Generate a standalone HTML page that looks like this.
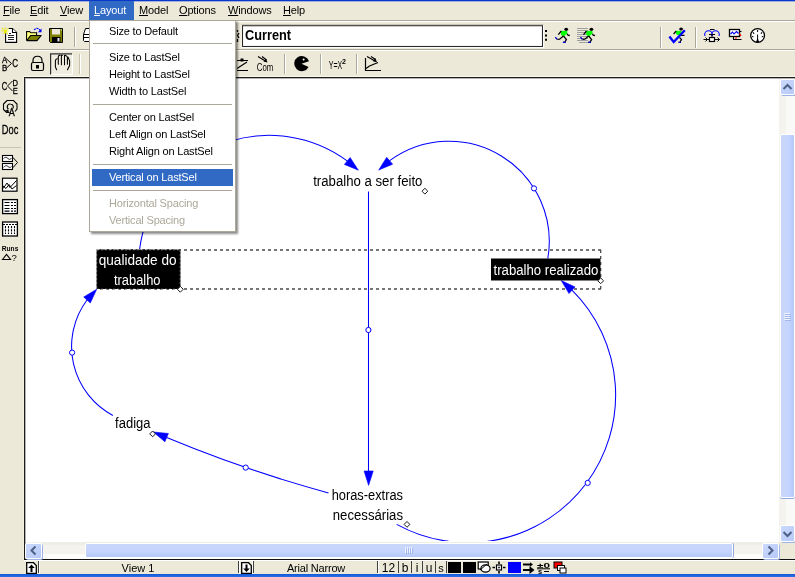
<!DOCTYPE html>
<html>
<head>
<meta charset="utf-8">
<title>Vensim</title>
<style>
html,body{margin:0;padding:0;}
body{width:795px;height:577px;overflow:hidden;background:#ece9d8;position:relative;font-family:"Liberation Sans",sans-serif;font-size:11px;color:#000;}
.abs{position:absolute;}
#topline{left:0;top:0;width:795px;height:1px;background:#0a36c9;}
#topline2{left:0;top:1px;width:795px;height:1px;background:#9fb0e0;}
#botline{left:0;top:574px;width:795px;height:3px;background:linear-gradient(#1458d8,#2d6fe6);}
/* menubar */
#menubar{left:0;top:2px;width:795px;height:18px;}
.mi{letter-spacing:-0.15px;position:absolute;top:0px;height:18px;line-height:20px;font-size:11px;white-space:nowrap;}
.mi u{text-decoration:underline;}
#mlayout{background:#316ac5;color:#fff;}
.hl{position:absolute;left:0;width:795px;height:1px;}
/* popup */
#popup{left:89px;top:20px;width:145px;height:210px;background:#fff;border:1px solid #aca899;box-shadow:2px 2px 2px rgba(0,0,0,.45);}
.pi{letter-spacing:-0.18px;position:absolute;left:2px;width:141px;height:17px;line-height:17px;font-size:11px;white-space:nowrap;}
.pi span{position:absolute;left:17px;top:0;}
.pi.sel{background:#316ac5;color:#fff;}
svg{will-change:transform;}
.pi.dis{color:#aca899;}
.psep{position:absolute;left:3px;width:139px;height:1px;background:#aca899;}
/* canvas */
#canvas{left:24px;top:77px;width:771px;height:484px;background:#fff;}
#cv-top{left:24px;top:77px;width:771px;height:1px;background:#1c1c1c;}
#cv-left{left:24px;top:77px;width:1px;height:483px;background:#1c1c1c;}
#cv-bot{left:24px;top:559px;width:771px;height:2px;background:linear-gradient(#111 0,#111 55%,#fff 56%,#fff 100%);}
/* scrollbars */
#vsb{left:779px;top:79px;width:16px;height:463px;background:#f4f3ee;}
#hsb{left:26px;top:542px;width:753px;height:17px;background:#f4f3ee;}
#corner{left:779px;top:542px;width:16px;height:17px;background:#ece9d8;}
.sbtn{position:absolute;background:linear-gradient(135deg,#cbd9fd,#b6c9f7);box-shadow:1px 1px 0 #9db3e6;border:1px solid #fff;border-radius:2px;box-sizing:border-box;}
.thumb{position:absolute;background:#c3d3fd;border:1px solid #fff;border-radius:2px;box-sizing:border-box;}
/* status */
#status{left:0;top:561px;width:795px;height:13px;font-size:12px;}
.st{position:absolute;top:561px;height:13px;line-height:14px;font-size:11px;text-align:center;white-space:nowrap;}
.vs{position:absolute;top:561px;width:1px;height:12px;background:#404040;}
.vw{position:absolute;top:561px;width:1px;height:13px;background:#fff;}
</style>
</head>
<body>
<div id="root" style="position:absolute;left:0;top:0;width:795px;height:577px;will-change:transform">
<div class="abs" id="topline"></div>
<div class="abs" id="topline2"></div>

<!-- MENUBAR -->
<div class="mi" style="left:3px"><u>F</u>ile</div>
<div class="mi" style="left:30px"><u>E</u>dit</div>
<div class="mi" style="left:60px"><u>V</u>iew</div>
<div class="mi" id="mlayout" style="left:89px;top:1px;width:45px;height:19px;line-height:18px;"><span style="margin-left:5px"><u>L</u>ayout</span></div>
<div class="mi" style="left:139px"><u>M</u>odel</div>
<div class="mi" style="left:179px"><u>O</u>ptions</div>
<div class="mi" style="left:228px"><u>W</u>indows</div>
<div class="mi" style="left:283px"><u>H</u>elp</div>
<div class="hl" style="top:20px;background:#aca899"></div>
<div class="hl" style="top:21px;background:#fff"></div>
<div class="hl" style="top:49px;background:#aca899"></div>
<div class="hl" style="top:50px;background:#fff"></div>

<!-- TOOLBAR1 -->
<svg class="abs" id="tbsvg" style="left:0;top:22px" width="795" height="55" viewBox="0 22 795 55">
<!-- NEW -->
<g stroke="#000" stroke-width="1.1" fill="#fff">
<path d="M5.6 32V42.4H16.6V32.5L12.5 28.5H8.5"/>
<path d="M12.5 28.5V32.5H16.6" fill="#fff"/>
<path d="M8 35.5H14M8 37.5H14M8 39.5H14M9 33.5H11" stroke-width="1.1" stroke="#222"/>
</g>
<path d="M2 28L8.5 34.5M8.5 28.5L3 33.5M5.2 27.5V34.5M1.5 31H9" stroke="#e6e600" stroke-width="1.1" fill="none" stroke-dasharray="1.6 .7"/>
<!-- OPEN -->
<path d="M26.6 40.3V31.6H29.6L30.8 32.8H36.6V35" fill="#ffff66" stroke="#000" stroke-width="1.1"/>
<path d="M27.6 39.5V32.6H29.4L30.4 33.8H35.6V35H30.6Z" fill="#ffff88"/>
<path d="M26.8 40.6L30.6 35.5H41.2L37 40.6Z" fill="#808000" stroke="#000" stroke-width="1.1" stroke-linejoin="round"/>
<path d="M34.2 30C35.8 27.8 38.5 27.8 40 30.2" fill="none" stroke="#0000ff" stroke-width="1.2" stroke-dasharray="2 .8"/>
<path d="M41.5 28.5V32.2H37.8Z" fill="#0000ff"/>
<!-- SAVE -->
<path d="M49.5 28.5H62.5V42.5H50.5L49.5 41.5Z" fill="#808000" stroke="#000" stroke-width="1"/>
<rect x="52" y="29" width="8" height="5.5" fill="#ece9d8"/>
<rect x="52" y="37" width="8.5" height="5" fill="#000"/>
<rect x="57.5" y="38" width="2" height="3.5" fill="#e8e8e8"/>
<rect x="61" y="29.5" width="1" height="1" fill="#fff"/>
<!-- sep -->
<path d="M74.5 27V47" stroke="#aca899" stroke-width="1"/><path d="M75.5 27V47" stroke="#fff" stroke-width="1"/>
<!-- PRINT (partial) -->
<path d="M85.5 28.5H90V34.5H83.5Z" fill="#fff" stroke="#000" stroke-width="1"/>
<path d="M83.5 34.5H90V41.5H84.5L83.5 40.5Z" fill="#fff" stroke="#000" stroke-width="1"/>
<path d="M84 37.5H90" stroke="#000" stroke-width="1"/>
<!-- grip partial before Current -->
<path d="M237.5 30V32M239 33L237.5 35.5L239 38M237.5 39V42" stroke="#000" stroke-width="1.3" fill="none"/>
<!-- textbox -->
<rect x="242.5" y="25.7" width="300" height="20.8" fill="#fff" stroke="#2a2a2a" stroke-width="1.1"/>
<path d="M241.5 24.6H543.5" fill="none" stroke="#c4c1b3" stroke-width="1"/>
<path d="M241.2 25V47.5" fill="none" stroke="#f8f6ee" stroke-width="1"/>
<path d="M543.6 25V47.6H242" fill="none" stroke="#fff" stroke-width="1"/>
<text x="245" y="40.2" font-family="'Liberation Sans',sans-serif" font-weight="bold" font-size="14px" textLength="46" lengthAdjust="spacingAndGlyphs">Current</text>
<!-- grip -->
<path d="M545 30H547V32H545ZM545 34.4H547V36.4H545ZM545 38.8H547V40.8H545Z" fill="#000"/>
<!-- runner1 -->
<g id="runner">
<ellipse cx="566.2" cy="29.3" rx="1.9" ry="1.6" fill="#000"/>
<path d="M561 30.8L567.2 31L567.4 33.6L563.6 36.4L561 35Z" fill="#00ff00"/>
<path d="M561.3 31L558.3 34.6M567.3 33.8L568 35.2L569.8 35.5M563.4 36L559.6 39.2L557.3 39.3M563.6 36.2L566.4 39.6L564.9 41.8" fill="none" stroke="#000" stroke-width="1.3"/>
<path d="M555.3 37.3L557.2 39.4M562.9 42.2H565.8" stroke="#0000c0" stroke-width="1.4" fill="none"/>
</g>
<!-- runner2 -->
<path d="M577 28.5H588M577 30.5H588M577 32.5H588M577 34.5H588M577 36.5H588M577 38.5H588M577 40.5H588M579 42.5H590" stroke="#a0a0a0" stroke-width="1"/>
<use href="#runner" x="25.2" y="0"/>
<!-- sep -->
<path d="M660.5 27V48" stroke="#aca899" stroke-width="1"/><path d="M661.5 27V48" stroke="#fff" stroke-width="1"/>
<!-- check runner -->
<ellipse cx="681.1" cy="29" rx="1.9" ry="1.6" fill="#000"/>
<path d="M676 30.8L681.5 31L681 34.5L677.5 35.2L676 34Z" fill="#00ff00"/>
<path d="M676.2 31L673.6 34M681 35.4H684.5M679.5 37.5L681.5 39.5L680 41.8" fill="none" stroke="#000" stroke-width="1.2"/>
<path d="M678.3 42.3H681" stroke="#0000c0" stroke-width="1.3"/>
<path d="M669.4 36.6L673.7 42L684.8 30.2" fill="none" stroke="#0000ff" stroke-width="2.4"/>
<!-- sep -->
<path d="M695.5 27V48" stroke="#aca899" stroke-width="1"/><path d="M696.5 27V48" stroke="#fff" stroke-width="1"/>
<!-- stock flow loops -->
<circle cx="708.5" cy="34.5" r="3.8" fill="none" stroke="#0000ff" stroke-width="1.1"/>
<circle cx="715.5" cy="34.5" r="3.8" fill="none" stroke="#0000ff" stroke-width="1.1"/>
<rect x="704" y="36" width="16" height="7" fill="#ece9d8"/>
<path d="M710 29.5H714.5M709 34.5H715M712 34.5V37" stroke="#000" stroke-width="1" fill="none"/>
<rect x="709.5" y="37.5" width="5" height="4" fill="#fff" stroke="#000" stroke-width="1.2"/>
<path d="M703.5 39.5H709M715 39.5H719.5M705.5 37.5L707.5 39.5L705.5 41.5M717.5 37.5L719.5 39.5L717.5 41.5" stroke="#000" stroke-width="1" fill="none"/>
<!-- monitor graph -->
<rect x="729.5" y="29.5" width="10" height="7" fill="#fff" stroke="#000" stroke-width="1.3"/>
<path d="M730.5 34L732.5 32L734 34L736.5 31.5L738.5 33.5" fill="none" stroke="#0000ff" stroke-width="1.1"/>
<path d="M739.5 31.5H741.5M733.5 37V39.5H741.5" fill="none" stroke="#000" stroke-width="1.1"/>
<path d="M739.5 33.5L741 36M735 38H737" stroke="#ff0000" stroke-width="1.2" fill="none"/>
<!-- dial -->
<circle cx="757.6" cy="35.5" r="6.9" fill="#fff" stroke="#000" stroke-width="1.3"/>
<path d="M757.6 42V34.5M753 32L754 34M757.6 30V32M762 32L761 34M752 36.5L753.5 36.8M763.2 36.5L761.7 36.8" stroke="#000" stroke-width="1" fill="none"/>
<path d="M756 42.2L757.6 38L759.2 42.2Z" fill="#000"/>

<!-- TOOLBAR 2 -->
<!-- A>C B -->
<g font-family="'Liberation Sans',sans-serif" font-size="8.5px" fill="#000" stroke="#000" stroke-width=".3">
<text x="2" y="62.6" font-size="9px" textLength="5.2" lengthAdjust="spacingAndGlyphs">A</text>
<text x="2" y="70.6" font-size="9px" textLength="5.2" lengthAdjust="spacingAndGlyphs">B</text>
<text x="12.3" y="67.2" font-size="10px" textLength="5.8" lengthAdjust="spacingAndGlyphs">C</text>
</g>
<path d="M6 58.5L11.5 63.5L6 68.5" fill="none" stroke="#000" stroke-width="1"/>
<!-- lock -->
<path d="M33 62.5V60.5C33 54.8 42 54.8 42 60.5V62.5" fill="none" stroke="#000" stroke-width="1.2"/>
<rect x="31.5" y="62.5" width="12" height="8" rx="1.5" fill="none" stroke="#000" stroke-width="1.2"/>
<rect x="36" y="65" width="3" height="3.5" fill="#000"/>
<!-- hand pressed -->
<rect x="51" y="54" width="21.5" height="20.5" fill="#efece0"/>
<path d="M50.6 74.5V53.8H72" fill="none" stroke="#303030" stroke-width="1.2"/>
<path d="M51 74.5H72.5V54.5" fill="none" stroke="#fff" stroke-width="1"/>
<path d="M56.6 69.8L55.4 67V60.6C55.6 59.4 56.3 58.9 57.2 58.7M58.3 64.2V56.6C58.5 55.6 59.3 55.1 60.2 55.1M61.4 64.7V55.4M61.4 55.2H62.6M64.5 64.7V55.4M64.5 55.2C65.5 55.2 66.2 55.5 66.5 56.2M67.4 64.2V56.8M67.6 57C68.2 57.4 68.5 57.8 68.6 58.5L69.6 60.8V65.6L67.5 69.8" fill="none" stroke="#000" stroke-width="1.05" stroke-linecap="round"/>
<!-- sep -->
<path d="M79.5 54V74" stroke="#aca899" stroke-width="1" opacity=".6"/><path d="M80.5 54V74" stroke="#fff" stroke-width="1"/>
<!-- partial icon after menu -->
<path d="M237 60.5H248M237 70.5H248M237 68.5L247 62" stroke="#000" stroke-width="1.2" fill="none"/>
<rect x="240.5" y="58.5" width="3" height="3" fill="#000"/>
<!-- Com -->
<path d="M258 56.5L266 61.5M262 56.5L266.5 60" stroke="#000" stroke-width="1.1" fill="none"/>
<path d="M267.5 62.5L263.5 61.5L266 58.5Z" fill="#000"/>
<text x="256.8" y="71" font-family="'Liberation Sans',sans-serif" font-size="10.5px" textLength="16.5" lengthAdjust="spacingAndGlyphs">Com</text>
<!-- sep -->
<path d="M284.5 54V74" stroke="#aca899" stroke-width="1"/><path d="M285.5 54V74" stroke="#fff" stroke-width="1"/>
<!-- pacman -->
<path d="M301.5 63.7L309 61.2A7.6 7.6 0 1 0 308.6 67Z" fill="#000"/>
<circle cx="303.6" cy="59.5" r="1" fill="#fff"/>
<!-- sep -->
<path d="M320.5 54V74" stroke="#aca899" stroke-width="1"/><path d="M321.5 54V74" stroke="#fff" stroke-width="1"/>
<!-- Y=X2 -->
<text x="328.8" y="69" font-family="'Liberation Sans',sans-serif" font-size="11.5px" textLength="13.5" lengthAdjust="spacingAndGlyphs">Y=X</text>
<text x="342" y="63.5" font-family="'Liberation Sans',sans-serif" font-size="7px" font-weight="bold">2</text>
<!-- sep -->
<path d="M356.5 54V74" stroke="#aca899" stroke-width="1"/><path d="M357.5 54V74" stroke="#fff" stroke-width="1"/>
<!-- graph-arrow icon -->
<path d="M365.5 58V70.5H381M366 68.5L369.5 66L378 62.5" fill="none" stroke="#000" stroke-width="1.2"/>
<path d="M367 56.5L375 61M371 56.5L375.5 59.5" stroke="#000" stroke-width="1.1" fill="none"/>
<path d="M377 62.2L372.8 61.2L375.3 58Z" fill="#000"/>
</svg>

<!-- LEFTBAR -->
<svg class="abs" id="lbsvg" style="left:0;top:78px" width="24" height="190" viewBox="0 78 24 190">
<g font-family="'Liberation Sans',sans-serif" fill="#000" stroke="#000" stroke-width=".3">
<!-- C<D E -->
<text x="1.8" y="90.2" font-size="10.5px" textLength="5.5" lengthAdjust="spacingAndGlyphs">C</text>
<text x="12.5" y="85.8" font-size="9px" textLength="5.5" lengthAdjust="spacingAndGlyphs">D</text>
<text x="12.8" y="93.5" font-size="9px" textLength="5" lengthAdjust="spacingAndGlyphs">E</text>
<path d="M12.5 81L7.5 86L12.5 91" fill="none" stroke="#000" stroke-width="1"/>
<!-- loop icon -->
<path d="M7 100.5H13.5L17 104V109L15 111.5M9.5 112.5H6.5L3.5 109.5V104L7 100.5" fill="none" stroke="#000" stroke-width="1.1"/>
<path d="M8.5 109C6 107.5 7.5 103.5 10.5 104C13 104.2 14 107 12.8 108.5" fill="none" stroke="#000" stroke-width="1.1"/>
<path d="M5 111L9 112.5L8 109.5Z" fill="#000"/>
<text x="8.8" y="115.6" font-size="10px" textLength="6" lengthAdjust="spacingAndGlyphs">A</text>
<!-- Doc -->
<text x="1.8" y="134.3" font-size="12.5px" textLength="16.5" lengthAdjust="spacingAndGlyphs">Doc</text>
</g>
<path d="M0 147.5H21" stroke="#c9c5b3" stroke-width="1"/>
<!-- two graphs arrow -->
<rect x="2.5" y="155.5" width="10" height="6" fill="#fff" stroke="#000" stroke-width="1.1"/>
<rect x="2.5" y="163.5" width="10" height="6" fill="#fff" stroke="#000" stroke-width="1.1"/>
<path d="M3.5 158.5C5 157 6.5 157 8 158.5S10.5 159.5 11.5 158M3.5 167.5C5 165.5 6.5 165 8 166.5S10.5 167.5 11.5 166.5" fill="none" stroke="#000" stroke-width=".8"/>
<path d="M12.8 157.3L17.5 162.5L12.8 167.8" fill="none" stroke="#000" stroke-width="1"/>
<!-- graph -->
<rect x="2.5" y="178.2" width="14.5" height="13" fill="#fff" stroke="#000" stroke-width="1.2"/>
<path d="M3 188.5L7 183L10 187.5L16.5 180.5M3 186L6 188.5L9 184.5L12 189L16.5 185.5" fill="none" stroke="#000" stroke-width="1"/>
<!-- table -->
<rect x="2.6" y="199.6" width="14.8" height="14" fill="#fff" stroke="#000" stroke-width="1.3"/>
<path d="M4.5 202.5H9.5M11 202.5H13M14 202.5H16M4.5 205.5H9.5M11 205.5H13M14 205.5H16M4.5 208.5H9.5M11 208.5H13M14 208.5H16M4.5 211.2H9.5M11 211.2H13M14 211.2H16" stroke="#000" stroke-width="1.2"/>
<!-- table2 -->
<rect x="2.6" y="222" width="14.8" height="14" fill="#fff" stroke="#000" stroke-width="1.3"/>
<path d="M3 224.5H17" stroke="#000" stroke-width="1.2" stroke-dasharray="2 1"/>
<path d="M5.5 226V234M8.5 226V234M11.5 226V234M14.5 226V234" stroke="#000" stroke-width="1.1" stroke-dasharray="2.2 1"/>
<!-- Runs -->
<text x="1.8" y="250.5" font-family="'Liberation Sans',sans-serif" font-weight="bold" font-size="8px" textLength="16.5" lengthAdjust="spacingAndGlyphs">Runs</text>
<path d="M2.5 259.5L6.5 254.5L10.5 259.5Z" fill="none" stroke="#000" stroke-width="1.1"/>
<text x="11.5" y="260.5" font-family="'Liberation Sans',sans-serif" font-size="9.5px">?</text>
</svg>

<!-- CANVAS -->
<div class="abs" id="canvas"></div>
<svg class="abs" id="diagram" style="left:26px;top:79px;font-family:'Liberation Sans',sans-serif;font-size:15px" width="753" height="462.4" viewBox="26 79 753 462.4">
<path d="M100 250H601M100 289H601" fill="none" stroke="#4a4a4a" stroke-width="1.5" stroke-dasharray="3 3"/>
<path d="M600.7 250V289" fill="none" stroke="#4a4a4a" stroke-width="1.3" stroke-dasharray="3 3"/>
<path d="M139.6 249.0A131.1 131.1 0 0 1 347.2 160.9" fill="none" stroke="#0000ff" stroke-width="1.05"/>
<path d="M358.4 170.2L344.4 164.4L350.1 157.5Z" fill="#0000ff" stroke="#0000ff" stroke-width="0.6" stroke-linejoin="round"/>
<path d="M547.8 258.5A100.2 100.2 0 0 0 389.7 160.7" fill="none" stroke="#0000ff" stroke-width="1.05"/>
<path d="M378.7 170.1L386.7 157.3L392.6 164.2Z" fill="#0000ff" stroke="#0000ff" stroke-width="0.6" stroke-linejoin="round"/>
<circle cx="534.0" cy="188.4" r="2.6" fill="#fff" stroke="#0000ff" stroke-width="1"/>
<path d="M368.5 191.5V472" stroke="#0000ff" stroke-width="1.05" fill="none"/>
<path d="M368.6 485.4L364.1 471L373.2 471Z" fill="#0000ff" stroke="#0000ff" stroke-width="0.6" stroke-linejoin="round"/>
<circle cx="368.4" cy="330.0" r="2.6" fill="#fff" stroke="#0000ff" stroke-width="1"/>
<path d="M328.5 492.9A1303.5 1303.5 0 0 1 166.7 437.6" fill="none" stroke="#0000ff" stroke-width="1.05"/>
<path d="M153.3 432.0L168.4 433.5L164.9 441.8Z" fill="#0000ff" stroke="#0000ff" stroke-width="0.6" stroke-linejoin="round"/>
<circle cx="245.7" cy="467.6" r="2.6" fill="#fff" stroke="#0000ff" stroke-width="1"/>
<path d="M112.9 415.5A78.1 78.1 0 0 1 87.0 300.0" fill="none" stroke="#0000ff" stroke-width="1.05"/>
<path d="M96.7 289.3L90.3 303.0L83.7 297.0Z" fill="#0000ff" stroke="#0000ff" stroke-width="0.6" stroke-linejoin="round"/>
<circle cx="72.1" cy="352.6" r="2.6" fill="#fff" stroke="#0000ff" stroke-width="1"/>
<path d="M396.7 524.4A147.7 147.7 0 0 0 572.0 290.2" fill="none" stroke="#0000ff" stroke-width="1.05"/>
<path d="M561.2 280.5L575.0 286.9L569.0 293.6Z" fill="#0000ff" stroke="#0000ff" stroke-width="0.6" stroke-linejoin="round"/>
<circle cx="587.7" cy="482.9" r="2.6" fill="#fff" stroke="#0000ff" stroke-width="1"/>
<rect x="96.5" y="249.5" width="84" height="39.5" fill="#000"/>
<rect x="491" y="258.5" width="109.5" height="22" fill="#000"/>
<path d="M97 249.8H180M97 289.2H180" fill="none" stroke="#fff" stroke-width="1" stroke-dasharray="2 2" opacity="0.5"/>
<path d="M96.8 250V289M180 250V289" fill="none" stroke="#fff" stroke-width="0.8" stroke-dasharray="2 2" opacity="0.4"/>
<text x="313.2" y="186.3" textLength="109.2" lengthAdjust="spacingAndGlyphs" fill="#000">trabalho a ser feito</text>
<text x="98.7" y="265.2" textLength="77.9" lengthAdjust="spacingAndGlyphs" fill="#fff">qualidade do</text>
<text x="114.0" y="284.7" textLength="46.5" lengthAdjust="spacingAndGlyphs" fill="#fff">trabalho</text>
<text x="493.5" y="275.2" textLength="104.8" lengthAdjust="spacingAndGlyphs" fill="#fff">trabalho realizado</text>
<text x="115.1" y="428.4" textLength="35.4" lengthAdjust="spacingAndGlyphs" fill="#000">fadiga</text>
<text x="331.7" y="500.2" textLength="71.3" lengthAdjust="spacingAndGlyphs" fill="#000">horas-extras</text>
<text x="332.8" y="519.8" textLength="70.2" lengthAdjust="spacingAndGlyphs" fill="#000">necessárias</text>
<path d="M422.0 191.2L424.9 188.3L427.8 191.2L424.9 194.1Z" fill="#fff" stroke="#000" stroke-width="0.9"/>
<path d="M177.4 289.3L180.3 286.4L183.2 289.3L180.3 292.2Z" fill="#fff" stroke="#000" stroke-width="0.9"/>
<path d="M597.8 280.8L600.7 277.9L603.6 280.8L600.7 283.7Z" fill="#fff" stroke="#000" stroke-width="0.9"/>
<path d="M149.7 433.9L152.6 431.0L155.5 433.9L152.6 436.8Z" fill="#fff" stroke="#000" stroke-width="0.9"/>
<path d="M404.1 524.4L407.0 521.5L409.9 524.4L407.0 527.3Z" fill="#fff" stroke="#000" stroke-width="0.9"/>
</svg>
<div class="abs" style="left:24px;top:76px;width:771px;height:1px;background:#fbf9ee"></div>
<div class="abs" style="left:23px;top:77px;width:1px;height:483px;background:#f4f1e3"></div>
<div class="abs" style="left:25px;top:78px;width:770px;height:1px;background:#b4b4b4"></div>
<div class="abs" style="left:25px;top:78px;width:1px;height:481px;background:#b4b4b4"></div>
<div class="abs" id="cv-top"></div>
<div class="abs" id="cv-left"></div>
<div class="abs" id="cv-bot"></div>
<div class="abs" id="vsb"></div>
<div class="abs" style="left:786px;top:95px;width:9px;height:431px;background:#f9f9f7"></div>
<div class="abs" id="hsb"></div>
<div class="abs" style="left:42px;top:542px;width:721px;height:3px;background:#efeee6"></div>
<div class="abs" style="left:42px;top:554px;width:721px;height:5px;background:#fdfdfc"></div>
<div class="abs" id="corner"></div>
<!-- v buttons -->
<div class="sbtn" style="left:780px;top:79px;width:15px;height:16px"></div>
<svg class="abs" style="left:780px;top:79px" width="15" height="16"><path d="M3.5 10L7.5 6L11.5 10" fill="none" stroke="#4d6185" stroke-width="2"/></svg>
<div class="thumb" style="left:780px;top:134px;width:15px;height:364px;background:linear-gradient(90deg,#c9d7f9,#c4d4fd 60%,#b4c8f8);box-shadow:0 1px 0 #90aae2"></div>
<svg class="abs" style="left:783px;top:312px" width="9" height="9"><path d="M1 1.5H7M1 3.5H7M1 5.5H7M1 7.5H7" stroke="#eef3ff" stroke-width="1"/><path d="M2 2.5H8M2 4.5H8M2 6.5H8M2 8.5H8" stroke="#8ea6e0" stroke-width="1" opacity=".6"/></svg>
<div class="sbtn" style="left:780px;top:525px;width:15px;height:17px"></div>
<svg class="abs" style="left:780px;top:525px" width="15" height="17"><path d="M3.5 7L7.5 11L11.5 7" fill="none" stroke="#4d6185" stroke-width="2"/></svg>
<!-- h buttons -->
<div class="sbtn" style="left:25px;top:543px;width:17px;height:16px"></div>
<svg class="abs" style="left:25px;top:543px" width="17" height="16"><path d="M10.5 3.5L6.5 7.5L10.5 11.5" fill="none" stroke="#4d6185" stroke-width="2"/></svg>
<div class="thumb" style="left:85px;top:543px;width:648px;height:15px;background:linear-gradient(#c9d7f9,#c4d4fd 60%,#b4c8f8);box-shadow:1px 0 0 #90aae2"></div>
<svg class="abs" style="left:404px;top:546px" width="9" height="9"><path d="M1.5 1V7M3.5 1V7M5.5 1V7M7.5 1V7" stroke="#eef3ff" stroke-width="1"/><path d="M2.5 2V8M4.5 2V8M6.5 2V8M8.5 2V8" stroke="#8ea6e0" stroke-width="1" opacity=".6"/></svg>
<div class="sbtn" style="left:762px;top:543px;width:17px;height:16px"></div>
<svg class="abs" style="left:762px;top:543px" width="17" height="16"><path d="M6.5 3.5L10.5 7.5L6.5 11.5" fill="none" stroke="#4d6185" stroke-width="2"/></svg>

<!-- STATUS -->
<div id="statusbar">
<svg class="abs" style="left:26px;top:562px" width="11" height="12"><path d="M.7 .7H7.5L10.3 3.5V11.3H.7Z" fill="#fff" stroke="#000" stroke-width="1.3"/><path d="M5.5 2.5L2.2 6H4.5V10H6.5V6H8.8Z" fill="#000"/></svg>
<div class="vs" style="left:38px"></div><div class="vw" style="left:39px"></div>
<div class="st" style="left:40px;width:196px">View 1</div>
<div class="vs" style="left:238px"></div><div class="vw" style="left:239px"></div>
<svg class="abs" style="left:241px;top:562px" width="11" height="12"><path d="M.7 .7H7.5L10.3 3.5V11.3H.7Z" fill="#fff" stroke="#000" stroke-width="1.3"/><path d="M5.5 10L2.2 6.5H4.5V2.5H6.5V6.5H8.8Z" fill="#000"/></svg>
<div class="vw" style="left:252px"></div><div class="vs" style="left:253px"></div>
<div class="st" style="left:255px;width:122px;letter-spacing:-0.2px">Arial Narrow</div>
<div class="vs" style="left:377px"></div><div class="vw" style="left:378px"></div>
<div class="st" style="left:380px;width:17px;font-size:12px">12</div>
<div class="vs" style="left:398px"></div>
<div class="st" style="left:399px;width:12px;font-size:12px">b</div>
<div class="vs" style="left:411px"></div>
<div class="st" style="left:412px;width:10px;font-size:12px">i</div>
<div class="vs" style="left:422px"></div>
<div class="st" style="left:423px;width:12px;font-size:12px">u</div>
<div class="vs" style="left:435px"></div>
<div class="st" style="left:436px;width:10px;font-size:11px">s</div>
<div class="vs" style="left:446px"></div>
<div class="abs" style="left:448px;top:562px;width:13px;height:11px;background:#000"></div>
<div class="abs" style="left:463px;top:562px;width:13px;height:11px;background:#000"></div>
<div class="abs" style="left:508px;top:562px;width:13px;height:11px;background:#0000ff"></div>
<svg class="abs" style="left:476px;top:561px" width="92" height="13" viewBox="476 561 92 13">
<!-- box/ellipse -->
<rect x="478.2" y="562" width="10" height="7" fill="#fff" stroke="#000" stroke-width="1.2"/>
<ellipse cx="485.5" cy="568.5" rx="4.6" ry="3.6" fill="#fff" stroke="#000" stroke-width="1.2"/>
<path d="M480 570L487 564" stroke="#000" stroke-width="1"/>
<!-- crosshair -->
<rect x="496.5" y="565" width="5" height="5" fill="#fff" stroke="#000" stroke-width="1.2"/>
<path d="M499 561.5V564M499 571V573.5M492.5 567.5H495M503 567.5H505.5" stroke="#000" stroke-width="1.6"/>
<rect x="498.2" y="566.7" width="1.6" height="1.6" fill="#000"/>
<!-- arrows -->
<path d="M523 564.5H531M523 570H530" stroke="#000" stroke-width="1.8"/>
<path d="M534.5 570L529.5 566V574Z" fill="#000"/>
<path d="M533 564.5L530 562.3V566.7Z" fill="#000"/>
<!-- +-0 s -->
<text x="537" y="568" font-size="8px" font-family="'Liberation Sans',sans-serif" font-weight="bold" textLength="13" lengthAdjust="spacingAndGlyphs">±0</text>
<path d="M537 568.8H550" stroke="#000" stroke-width="1"/>
<text x="538" y="574.3" font-size="7.5px" font-family="'Liberation Sans',sans-serif" font-weight="bold">s</text>
<path d="M544 571.5H549" stroke="#000" stroke-width="1"/>
<!-- red squares -->
<rect x="554" y="562" width="8" height="6" fill="#ff0000" stroke="#000" stroke-width="1"/>
<rect x="557.5" y="565.5" width="7" height="5" fill="#fff" stroke="#000" stroke-width="1"/>
<rect x="560" y="568" width="6" height="5" fill="#fff" stroke="#000" stroke-width="1"/>
</svg>
</div>

<!-- POPUP MENU -->
<div class="abs" id="popup">
 <div class="pi" style="top:2px"><span>Size to Default</span></div>
 <div class="psep" style="top:22px"></div>
 <div class="pi" style="top:28px"><span>Size to LastSel</span></div>
 <div class="pi" style="top:45px"><span>Height to LastSel</span></div>
 <div class="pi" style="top:62px"><span>Width to LastSel</span></div>
 <div class="psep" style="top:83px"></div>
 <div class="pi" style="top:88px"><span>Center on LastSel</span></div>
 <div class="pi" style="top:105px"><span>Left Align on LastSel</span></div>
 <div class="pi" style="top:122px"><span>Right Align on LastSel</span></div>
 <div class="psep" style="top:143px"></div>
 <div class="pi sel" style="top:148px"><span>Vertical on LastSel</span></div>
 <div class="psep" style="top:169px"></div>
 <div class="pi dis" style="top:174px"><span>Horizontal Spacing</span></div>
 <div class="pi dis" style="top:191px"><span>Vertical Spacing</span></div>
</div>

<div class="abs" id="botline"></div>
</div>
</body>
</html>
